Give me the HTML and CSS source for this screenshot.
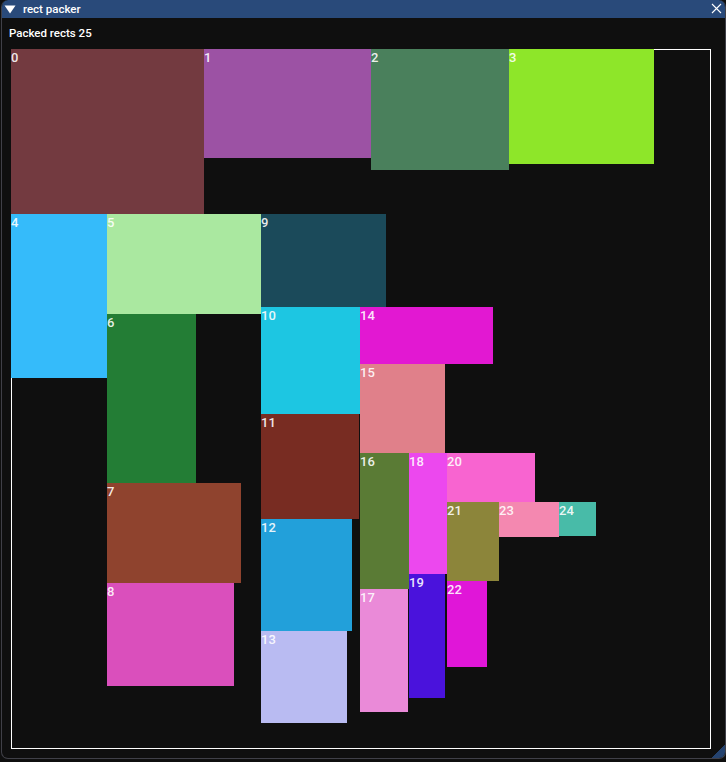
FILE: index.html
```html
<!DOCTYPE html>
<html>
<head>
<meta charset="utf-8">
<title>rect packer</title>
<link rel="stylesheet" href="styles.css">
</head>
<body>
<div class="window">
  <div class="titlebar">
    <svg class="collapse" width="12" height="9" viewBox="0 0 12 9"><polygon points="0.5,0.5 11.5,0.5 6,8.5" fill="#ffffff"/></svg>
    <span class="title">rect packer</span>
    <svg class="close" width="11" height="11" viewBox="0 0 11 11"><path d="M1 1 L10 10 M10 1 L1 10" stroke="#ffffff" stroke-width="1.1" fill="none"/></svg>
  </div>
  <div class="content">
    <div class="info">Packed rects 25</div>
    <div class="canvas">
      <div class="rect" style="left:0px;top:0px;width:193px;height:165px;background:#733a40">0</div>
      <div class="rect" style="left:193px;top:0px;width:167px;height:109px;background:#9c52a4">1</div>
      <div class="rect" style="left:360px;top:0px;width:138px;height:121px;background:#4a805c">2</div>
      <div class="rect" style="left:498px;top:0px;width:145px;height:115px;background:#8ee629">3</div>
      <div class="rect" style="left:0px;top:165px;width:96px;height:164px;background:#35bbfa">4</div>
      <div class="rect" style="left:96px;top:165px;width:154px;height:100px;background:#aae8a0">5</div>
      <div class="rect" style="left:96px;top:265px;width:89px;height:169px;background:#237d35">6</div>
      <div class="rect" style="left:96px;top:434px;width:134px;height:100px;background:#8f432e">7</div>
      <div class="rect" style="left:96px;top:534px;width:127px;height:103px;background:#da4fbc">8</div>
      <div class="rect" style="left:250px;top:165px;width:125px;height:93px;background:#1b4a5a">9</div>
      <div class="rect" style="left:250px;top:258px;width:99px;height:107px;background:#1dc6e2">10</div>
      <div class="rect" style="left:250px;top:365px;width:98px;height:105px;background:#782c22">11</div>
      <div class="rect" style="left:250px;top:470px;width:91px;height:112px;background:#22a0da">12</div>
      <div class="rect" style="left:250px;top:582px;width:86px;height:92px;background:#b9bbf2">13</div>
      <div class="rect" style="left:349px;top:258px;width:133px;height:57px;background:#e218d2">14</div>
      <div class="rect" style="left:349px;top:315px;width:85px;height:89px;background:#e0808a">15</div>
      <div class="rect" style="left:349px;top:404px;width:49px;height:136px;background:#5a7b35">16</div>
      <div class="rect" style="left:349px;top:540px;width:48px;height:123px;background:#ea8ad8">17</div>
      <div class="rect" style="left:398px;top:404px;width:38px;height:121px;background:#ec48ee">18</div>
      <div class="rect" style="left:398px;top:525px;width:36px;height:124px;background:#4a12dc">19</div>
      <div class="rect" style="left:436px;top:404px;width:88px;height:49px;background:#f864d0">20</div>
      <div class="rect" style="left:436px;top:453px;width:52px;height:79px;background:#8c853a">21</div>
      <div class="rect" style="left:436px;top:532px;width:40px;height:86px;background:#e016d8">22</div>
      <div class="rect" style="left:488px;top:453px;width:60px;height:35px;background:#f488b0">23</div>
      <div class="rect" style="left:548px;top:453px;width:37px;height:34px;background:#48bba8">24</div>
    </div>
  </div>
  <div class="grip"></div>
</div>
</body>
</html>
```
FILE: styles.css
```css
html, body {
  margin: 0;
  padding: 0;
  background: #0f0f0f;
}
body {
  width: 726px;
  height: 762px;
  overflow: hidden;
  font-family: Roboto, "Liberation Sans", sans-serif;
  color: #ffffff;
}
.window {
  position: relative;
  box-sizing: border-box;
  margin-left: 1px;
  width: 725px;
  height: 759px;
  background: #0f0f0f;
  border: 1px solid #404048;
  border-top: none;
  border-radius: 7px;
  overflow: hidden;
}
.titlebar {
  display: flex;
  align-items: center;
  height: 18px;
  margin: 0 -1px;
  background: #294a7a;
  border-radius: 7px 7px 0 0;
}
.collapse {
  margin-left: 3px;
  margin-top: 1px;
}
.title {
  margin-left: 7px;
  font-size: 11.5px;
  line-height: 13px;
  font-weight: 500;
  flex: 1;
}
.close {
  margin-right: 4px;
  margin-top: -1px;
}
.content {
  padding: 9px 0 0 7px;
}
.info {
  font-size: 11.5px;
  line-height: 13px;
  font-weight: 500;
}
.canvas {
  position: relative;
  width: 700px;
  height: 700px;
  margin: 9px 0 0 2px;
}
.canvas::before {
  content: "";
  position: absolute;
  inset: 0;
  border: 1px solid #ffffff;
}
.rect {
  position: absolute;
  box-sizing: border-box;
  padding: 1px 0 0 0;
  font-size: 13px;
  line-height: 15px;
  font-weight: 500;
  color: rgba(255, 255, 255, 0.9);
}
.grip {
  position: absolute;
  right: 0;
  bottom: 0;
  width: 14px;
  height: 14px;
  background: linear-gradient(135deg, transparent 50%, #25436f 50%);
}
```
